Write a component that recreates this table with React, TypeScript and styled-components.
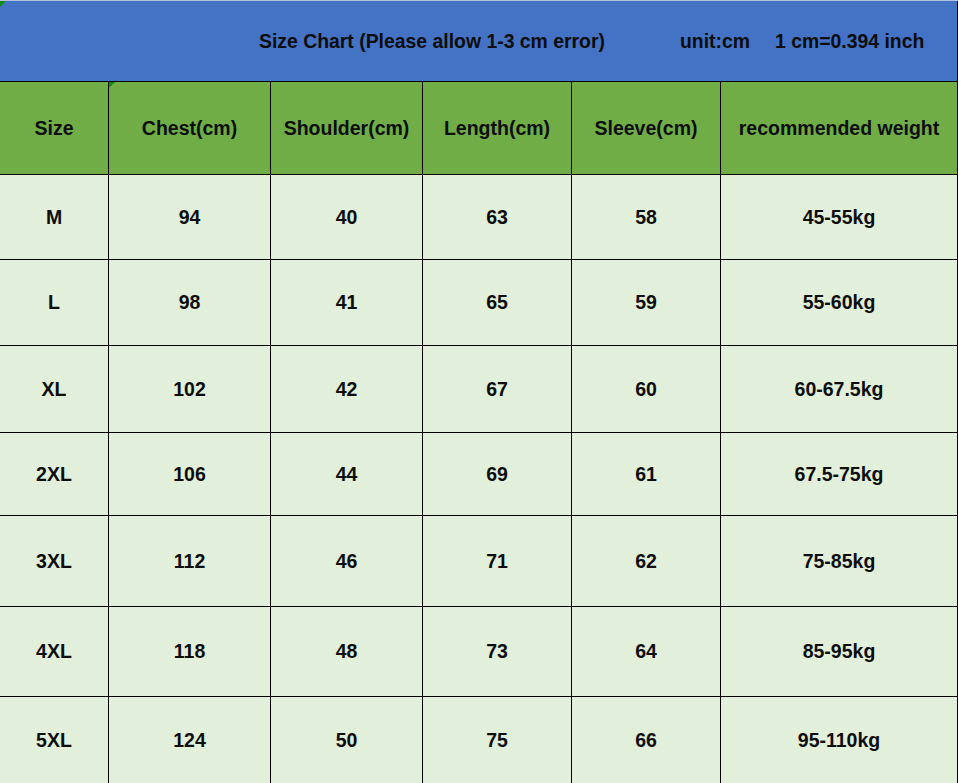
import React from "react";
import styled, { createGlobalStyle } from "styled-components";

const Global = createGlobalStyle`
  html, body { margin: 0; padding: 0; background: #e2efda; }
  body { font-family: "Liberation Sans", Arial, sans-serif; }
`;

const Page = styled.div`
  width: 958px;
  height: 783px;
  overflow: hidden;
  border-top: 1px solid #b4c3e0;
  box-sizing: border-box;
`;

const Grid = styled.div`
  display: grid;
  grid-template-columns: 108px 161px 151px 148px 148px 236px;
  grid-template-rows: 80px 92px 84px 85px 86px 82px 90px 89px 87px;
  gap: 1px;
  padding-right: 1px;
  background: #000;
  width: 958px;
  box-sizing: border-box;
`;

const Banner = styled.div`
  grid-column: 1 / -1;
  background: #4472c4;
  position: relative;
  display: flex;
  align-items: center;
  padding-left: 259px;
  font-size: 19.4px;
  font-weight: bold;
  color: #0d0d0d;
  white-space: pre;
`;

const BannerPart = styled.span<{ $gap?: number }>`
  margin-left: ${(p) => p.$gap ?? 0}px;
`;

const Cell = styled.div<{ $head?: boolean }>`
  position: relative;
  background: ${(p) => (p.$head ? "#70ad47" : "#e2efda")};
  display: flex;
  align-items: center;
  justify-content: center;
  font-size: 19.5px;
  font-weight: bold;
  color: #0d0d0d;
  white-space: nowrap;
`;

const Marker = styled.span`
  position: absolute;
  top: 0;
  left: 0;
  width: 0;
  height: 0;
  border-top: 6px solid #118a1c;
  border-right: 6px solid transparent;
`;

const headers = [
  "Size",
  "Chest(cm)",
  "Shoulder(cm)",
  "Length(cm)",
  "Sleeve(cm)",
  "recommended weight",
];

const rows = [
  ["M", "94", "40", "63", "58", "45-55kg"],
  ["L", "98", "41", "65", "59", "55-60kg"],
  ["XL", "102", "42", "67", "60", "60-67.5kg"],
  ["2XL", "106", "44", "69", "61", "67.5-75kg"],
  ["3XL", "112", "46", "71", "62", "75-85kg"],
  ["4XL", "118", "48", "73", "64", "85-95kg"],
  ["5XL", "124", "50", "75", "66", "95-110kg"],
];

export default function App() {
  return (
    <>
      <Global />
      <Page>
        <Grid>
          <Banner>
            <Marker />
            <BannerPart>Size Chart (Please allow 1-3 cm error)</BannerPart>
            <BannerPart $gap={75}>unit:cm</BannerPart>
            <BannerPart $gap={25}>1 cm=0.394 inch</BannerPart>
          </Banner>
          {headers.map((h, i) => (
            <Cell key={h} $head>
              {i === 1 && <Marker />}
              {h}
            </Cell>
          ))}
          {rows.map((r) =>
            r.map((v, i) => <Cell key={r[0] + i}>{v}</Cell>)
          )}
        </Grid>
      </Page>
    </>
  );
}
